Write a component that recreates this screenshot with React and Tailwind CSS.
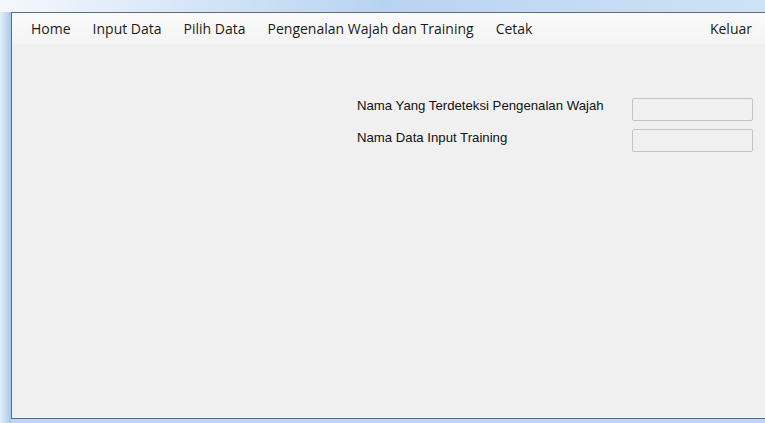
import React from "react";

const menu = ["Home", "Input Data", "Pilih Data", "Pengenalan Wajah dan Training", "Cetak"];

export default function App() {
  return (
    <div className="w-[765px] h-[423px] overflow-hidden flex flex-col bg-[#bcd6f1]">
      {/* window caption edge */}
      <div className="h-[12px] shrink-0 bg-gradient-to-r from-[#f4f8fc] via-[#b8d3f1] to-[#cfe2f6]" />
      <div className="flex flex-1 min-h-0">
        <div className="w-[11px] shrink-0 bg-gradient-to-r from-[#e4eefa] to-[#aac8ea]" />
        <div className="flex-1 flex flex-col border-l border-t border-b border-[#5d6b7a] bg-[#f0f0f0] mb-[4px]">
          <nav
            className="h-[31px] shrink-0 flex items-center pl-[19px] pr-[13px] gap-[22px] bg-gradient-to-b from-[#fafafa] to-[#f4f4f4] text-[#1b1b1b] text-[14px]"
            style={{ fontFamily: '"Open Sans", "Noto Sans", sans-serif' }}
          >
            {menu.map((m) => (
              <span key={m}>{m}</span>
            ))}
            <span className="ml-auto">Keluar</span>
          </nav>
          <div
            className="pl-[345px] pt-[54px] grid grid-cols-[275px_121px] gap-y-[8px] text-[13.2px] text-[#111]"
            style={{ fontFamily: '"Liberation Sans", Arial, sans-serif' }}
          >
            <span className="leading-none pt-[1px]">Nama Yang Terdeteksi Pengenalan Wajah</span>
            <div className="h-[23px] rounded-[2px] border border-[#c4c4c4] bg-[#f0f0f0]" />
            <span className="leading-none pt-[2px]">Nama Data Input Training</span>
            <div className="h-[23px] rounded-[2px] border border-[#c4c4c4] bg-[#f0f0f0]" />
          </div>
        </div>
      </div>
    </div>
  );
}
